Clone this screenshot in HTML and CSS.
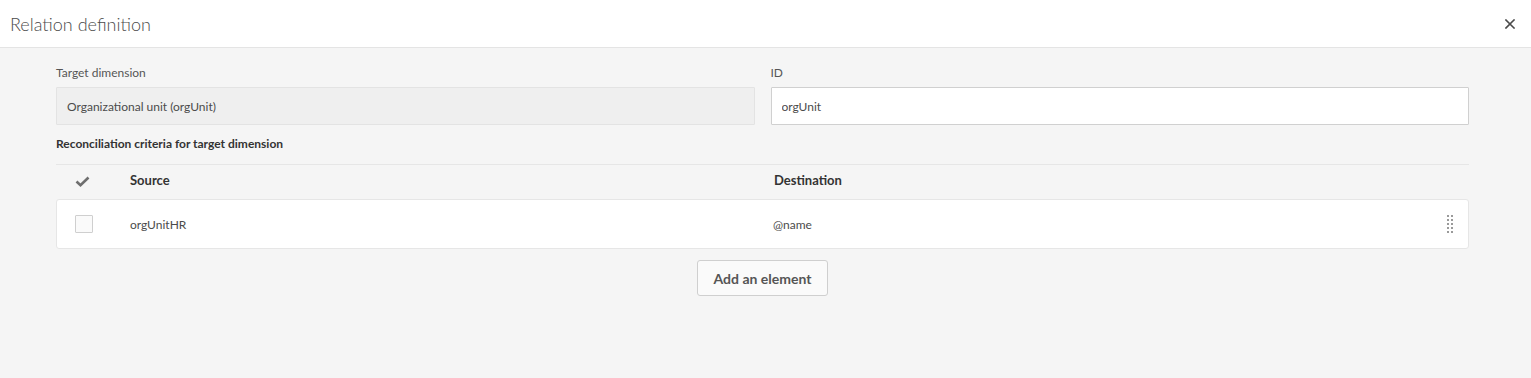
FILE: index.html
```html
<!DOCTYPE html>
<html lang="en">
<head>
    <meta charset="UTF-8">
    <meta name="viewport" content="width=device-width, initial-scale=1.0">
    <title>Relation definition</title>
    <link rel="stylesheet" href="styles.css">
</head>
<body>
    <div class="dialog">
        <header class="dialog-header">
            <span class="dialog-title">Relation definition</span>
            <span class="dialog-close">
                <svg width="10" height="10" viewBox="0 0 10 10">
                    <path d="M1 1 L9 9 M9 1 L1 9" stroke="#4b4b4b" stroke-width="1.6" stroke-linecap="square"/>
                </svg>
            </span>
        </header>
        <div class="dialog-body">
            <div class="field-row">
                <div class="form-group">
                    <label>Target dimension</label>
                    <div class="field field-readonly">Organizational unit (orgUnit)</div>
                </div>
                <div class="form-group">
                    <label for="id">ID</label>
                    <input class="field" type="text" id="id" value="orgUnit">
                </div>
            </div>

            <div class="section-title">Reconciliation criteria for target dimension</div>

            <div class="criteria">
                <div class="criteria-head">
                    <span class="col-check">
                        <svg width="15" height="11" viewBox="0 0 15 11">
                            <path d="M1.5 5.5 L5.5 9.2 L13.5 1.5" fill="none" stroke="#6e6e6e" stroke-width="2.6"/>
                        </svg>
                    </span>
                    <span class="col-source">Source</span>
                    <span class="col-dest">Destination</span>
                </div>
                <div class="criteria-row">
                    <span class="col-check"><span class="checkbox"></span></span>
                    <span class="col-source">orgUnitHR</span>
                    <span class="col-dest">@name</span>
                    <span class="drag-handle">
                        <i></i><i></i><i></i><i></i><i></i>
                        <i></i><i></i><i></i><i></i><i></i>
                    </span>
                </div>
            </div>

            <div class="actions">
                <button class="btn">Add an element</button>
            </div>
        </div>
    </div>
</body>
</html>
```

FILE: styles.css
```css
html, body {
    margin: 0;
    height: 100%;
}
body {
    font-family: Lato, "Open Sans", sans-serif;
    background-color: #f5f5f5;
    color: #4b4b4b;
}
.dialog-header {
    height: 47px;
    background-color: #fff;
    border-bottom: 1px solid #e4e4e4;
    display: flex;
    align-items: center;
    justify-content: space-between;
    padding: 0 16px 0 10px;
}
.dialog-title {
    font-size: 18px;
    font-weight: 300;
    color: #4b4b4b;
    margin-top: 1px;
}
.dialog-close {
    display: flex;
    margin-top: 1px;
    cursor: pointer;
}
.dialog-body {
    padding: 17px 62px 0 56px;
}
.field-row {
    display: flex;
    gap: 16px;
}
.form-group {
    flex: 1;
}
.form-group label {
    display: block;
    font-size: 12px;
    line-height: 16px;
    color: #555;
    margin-bottom: 6px;
}
.field {
    box-sizing: border-box;
    width: 100%;
    height: 38px;
    padding: 0 10px;
    font-family: inherit;
    font-size: 12px;
    color: #4b4b4b;
    background-color: #fff;
    border: 1px solid #d0d0d0;
    border-radius: 1px;
    outline: none;
}
.field-readonly {
    display: flex;
    align-items: center;
    background-color: #efefef;
    border-color: #e3e3e3;
}
.section-title {
    margin-top: 11px;
    font-size: 12px;
    line-height: 16px;
    font-weight: 700;
    color: #333;
}
.criteria {
    margin-top: 12px;
    border-top: 1px solid #e6e6e6;
}
.criteria-head,
.criteria-row {
    display: flex;
    align-items: center;
    font-size: 12px;
}
.criteria-head {
    box-sizing: border-box;
    height: 34px;
    padding-bottom: 4px;
    font-size: 13px;
    font-weight: 700;
    color: #333;
}
.criteria-row {
    height: 48px;
    background-color: #fff;
    border: 1px solid #e6e6e6;
    border-radius: 3px;
    color: #4b4b4b;
}
.col-check {
    width: 74px;
    box-sizing: border-box;
    padding-left: 19px;
    display: flex;
    align-items: center;
}
.criteria-head .col-check {
    padding-top: 2px;
}
.criteria-row .col-check {
    width: 73px;
    padding-left: 18px;
}
.col-source {
    width: 644px;
}
.col-dest {
    flex: 1;
}
.criteria-row .col-dest {
    margin-left: -1px;
}
.checkbox {
    box-sizing: border-box;
    width: 18px;
    height: 18px;
    border: 1px solid #cfcfcf;
    border-radius: 1px;
    background-color: #fafafa;
}
.drag-handle {
    display: grid;
    grid-template-columns: 2px 2px;
    grid-auto-flow: column;
    grid-template-rows: repeat(5, 2px);
    gap: 2px 2px;
    margin-right: 15px;
}
.drag-handle i {
    width: 2px;
    height: 2px;
    background-color: #9a9a9a;
}
.actions {
    display: flex;
    justify-content: center;
    margin-top: 11px;
}
.btn {
    height: 36px;
    padding: 0 16px;
    font-family: inherit;
    font-size: 14px;
    font-weight: 700;
    color: #555;
    background-color: #fafafa;
    border: 1px solid #cfcfcf;
    border-radius: 3px;
    cursor: pointer;
}
```
